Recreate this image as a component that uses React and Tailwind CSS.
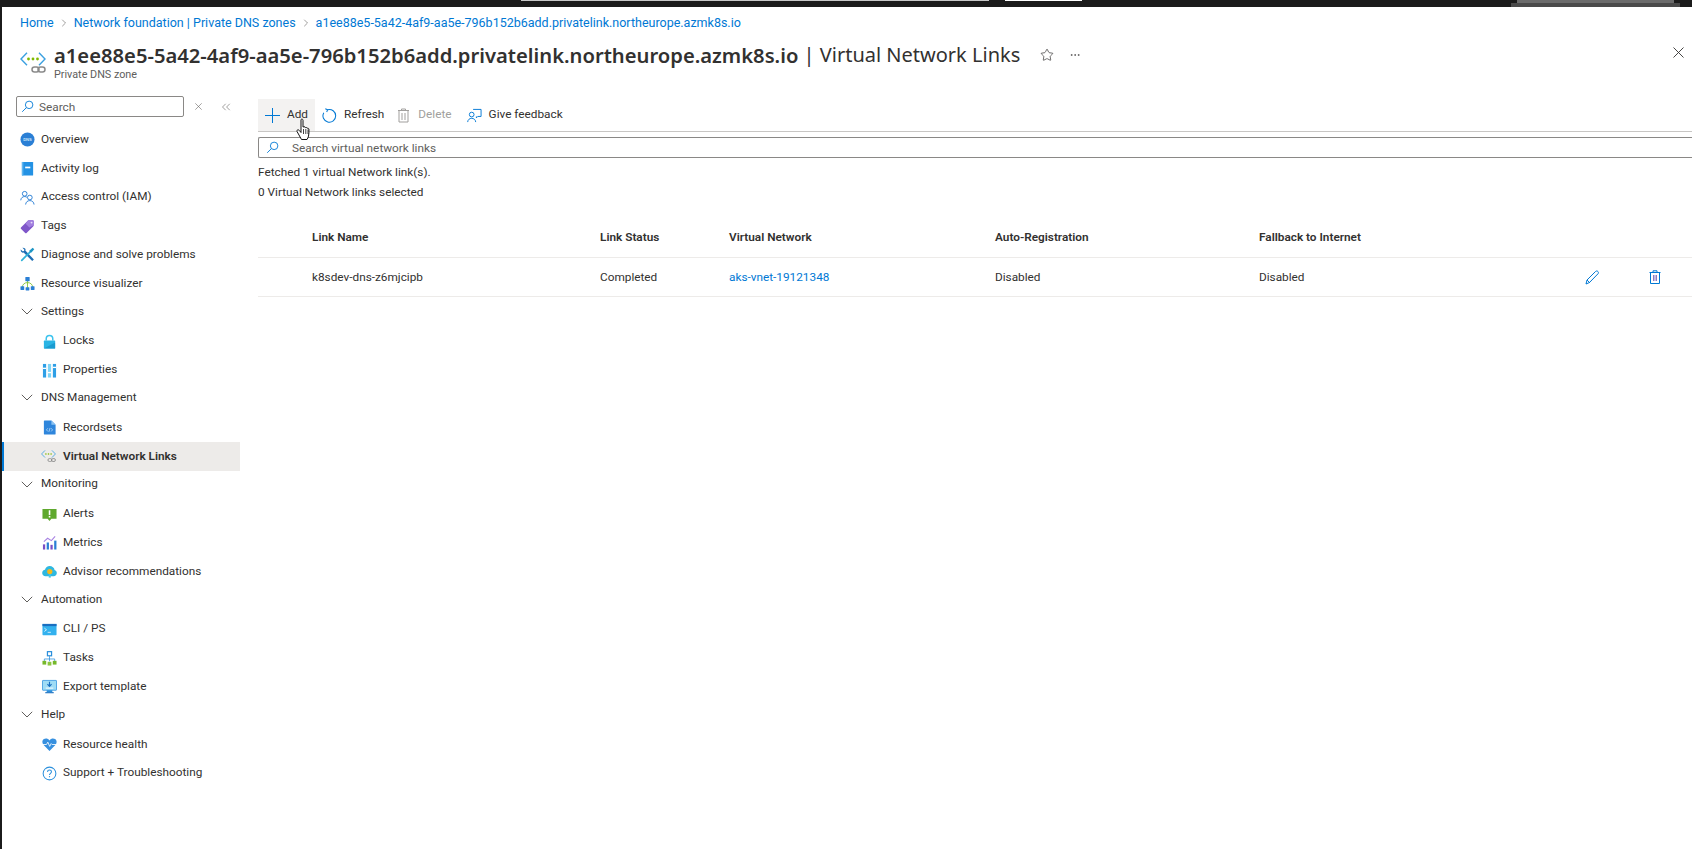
import { ChevronRight, ChevronsLeft, Star, MoreHorizontal } from 'lucide-react'

function Cross({ className, color = '#323130' }) {
  return (
    <svg className={className} viewBox="0 0 11 11" fill="none" stroke={color} strokeWidth="0.9">
      <path d="M.5.5l10 10M10.500.5l-10 10" />
    </svg>
  )
}

function SearchIcon({ className }) {
  return (
    <svg className={className} viewBox="0 0 16 16" fill="none" stroke="#0078d4" strokeWidth="1.1">
      <circle cx="10" cy="6" r="4.6" />
      <path d="M6.6 9.4 1.5 14.5" />
    </svg>
  )
}

function DnsLinkIcon({ className }) {
  return (
    <svg className={className} viewBox="0 0 26 21" fill="none">
      <path d="M7 .8 1 7l6 6.200" stroke="#3aa0e0" strokeWidth="1.400" />
      <path d="M19 .8 25 7l-6 6.200" stroke="#3aa0e0" strokeWidth="1.400" />
      <circle cx="8.500" cy="7" r="1.400" fill="#7fba00" />
      <circle cx="13" cy="7" r="1.400" fill="#7fba00" />
      <circle cx="17.500" cy="7" r="1.400" fill="#7fba00" />
      <rect x="12" y="15" width="7" height="5" rx="2.500" stroke="#8a8a8a" strokeWidth="1.500" />
      <rect x="18" y="15" width="7" height="5" rx="2.500" stroke="#8a8a8a" strokeWidth="1.500" />
    </svg>
  )
}

const icons = {
  overview: (
    <svg viewBox="0 0 16 16" className="w-[15px] h-[15px]">
      <circle cx="8" cy="8" r="7.5" fill="#2a7fd5" />
      <text x="8" y="9.6" fontSize="4.4" fontWeight="700" fill="#cfe6fa" textAnchor="middle" fontFamily="Liberation Sans, sans-serif">DNS</text>
    </svg>
  ),
  log: (
    <svg viewBox="0 0 16 16" className="w-[15px] h-[15px]">
      <rect x="2" y="1" width="12" height="14.5" rx="0.6" fill="#2492e4" />
      <rect x="2" y="1" width="1.6" height="14.5" fill="#5fb6f0" />
      <rect x="5.5" y="6" width="5.5" height="1.8" fill="#fff" />
    </svg>
  ),
  iam: (
    <svg viewBox="0 0 16 16" className="w-[15px] h-[15px]" fill="none" stroke="#2a7fd5" strokeWidth="1">
      <circle cx="5" cy="4" r="2.5" />
      <path d="M.8 11c.2-2.6 2-4 4.2-4 1 0 1.800.3 2.400.8" />
      <circle cx="10.500" cy="8" r="2.500" />
      <path d="M6 15.500c.2-2.600 2-4.200 4.500-4.200s4.300 1.600 4.500 4.200" />
    </svg>
  ),
  tags: (
    <svg viewBox="0 0 16 16" className="w-[15px] h-[15px]">
      <path d="M1 9 8 2c.4-.4.8-.6 1.300-.6h4.200c.6 0 1.100.5 1.100 1.100v4.200c0 .5-.2.900-.6 1.300l-7 7c-.4.400-1.100.4-1.500 0L1 10.500c-.4-.4-.4-1.100 0-1.500Z" fill="#7f56c9" />
      <path d="M8 2c.4-.4.800-.6 1.300-.6h4.200c.6 0 1.100.5 1.100 1.100v4.200L10 9 6 5Z" fill="#a27fdf" />
      <circle cx="12.300" cy="3.800" r="1" fill="#e6dcf7" />
    </svg>
  ),
  diagnose: (
    <svg viewBox="0 0 16 16" className="w-[15px] h-[15px]">
      <path d="M14.800 13.200 5.700 3.800l.3-1C5.700 1.300 4.200.5 2.600.8l2 2-.3 1.500-1.500.3-2-2c-.3 1.600.5 3.100 2 3.500l1-.3 9.200 9.200Z" fill="#1f6fb5" />
      <path d="M1.200 13.500 10 4.700l1.300 1.300-8.800 8.800c-.4.400-.9.400-1.300 0s-.4-.9 0-1.300Z" fill="#2fb2d8" />
      <path d="M10.200 3.800 13.500.8l1.700 1.700-3 3.300-1.400.2-.8-.8Z" fill="#1d95c4" />
    </svg>
  ),
  visualizer: (
    <svg viewBox="0 0 16 16" className="w-[15px] h-[15px]">
      <path d="M2.500 12c0-3 2.500-5 5.500-5s5.500 2 5.500 5" fill="none" stroke="#8cc63f" strokeWidth="1" />
      <path d="M8 5v8" stroke="#8cc63f" strokeWidth="1" />
      <rect x="5.700" y="1" width="4.600" height="4.600" rx="0.500" fill="#2a7fd5" />
      <rect x="0.500" y="11" width="4" height="4" rx="0.500" fill="#2a7fd5" />
      <rect x="6" y="12" width="4" height="3.500" rx="0.500" fill="#2a7fd5" />
      <rect x="11.500" y="11" width="4" height="4" rx="0.500" fill="#2a7fd5" />
    </svg>
  ),
  lock: (
    <svg viewBox="0 0 16 16" className="w-[15px] h-[15px]">
      <path d="M4.500 7V5a3.500 3.500 0 0 1 7 0v2" fill="none" stroke="#3cc3ee" strokeWidth="1.600" />
      <rect x="2" y="7" width="12" height="8.500" rx="0.600" fill="#2ab4e4" />
      <path d="M2 15.500 14 9v6.500Z" fill="#1a9bd0" />
    </svg>
  ),
  properties: (
    <svg viewBox="0 0 16 16" className="w-[15px] h-[15px]">
      <rect x="1" y="1" width="3.400" height="14.500" fill="#2e9fe6" />
      <rect x="6.300" y="1" width="3.400" height="14.500" fill="#7fd4f5" />
      <rect x="11.600" y="1" width="3.400" height="14.500" fill="#2e9fe6" />
      <rect x="1" y="5" width="3.400" height="1.400" fill="#fff" />
      <rect x="6.300" y="9.500" width="3.400" height="1.400" fill="#fff" />
      <rect x="11.600" y="4" width="3.400" height="1.400" fill="#fff" />
    </svg>
  ),
  records: (
    <svg viewBox="0 0 16 16" className="w-[15px] h-[15px]">
      <path d="M2 1a.5.5 0 0 1 .5-.5H10L14.500 5v10a.5.5 0 0 1-.5.5H2.500A.5.5 0 0 1 2 15Z" fill="#2f86dc" />
      <path d="M10 .5 14.500 5H10Z" fill="#8cc3f2" />
      <path d="M6.200 8.800 4.800 10.500l1.400 1.700M9.800 8.800l1.400 1.700-1.400 1.700M8.600 8.500l-1.200 4" stroke="#d8ecfc" strokeWidth="0.700" fill="none" />
    </svg>
  ),
  alerts: (
    <svg viewBox="0 0 16 16" className="w-[15px] h-[15px]">
      <path d="M.5 2h15v10.500H10L8 15l-2-2.500H.5Z" fill="#5fa82e" />
      <rect x="7.200" y="3.500" width="1.700" height="5" fill="#fff" />
      <rect x="7.200" y="9.500" width="1.700" height="1.700" fill="#fff" />
    </svg>
  ),
  metrics: (
    <svg viewBox="0 0 16 16" className="w-[15px] h-[15px]">
      <rect x="1" y="10" width="2.400" height="5.500" fill="#7a4fc4" />
      <rect x="5" y="8" width="2.400" height="7.500" fill="#2a7fd5" />
      <rect x="9" y="10.500" width="2.400" height="5" fill="#7a4fc4" />
      <rect x="13" y="6" width="2.400" height="9.500" fill="#2a7fd5" />
      <path d="M2 7 6 3.500 10 6l4-4.500" fill="none" stroke="#a882e3" strokeWidth="1.200" />
    </svg>
  ),
  advisor: (
    <svg viewBox="0 0 16 16" className="w-[15px] h-[15px]">
      <path d="M3.800 13C1.700 13 .2 11.500.2 9.600c0-1.800 1.300-3.200 3-3.400C3.700 3.800 5.800 2.200 8.200 2.200c2.700 0 4.800 1.800 5.200 4.200 1.400.4 2.400 1.600 2.400 3.100 0 1.900-1.500 3.500-3.400 3.500Z" fill="#2fb8e0" />
      <circle cx="8.300" cy="8" r="2.800" fill="#f6b91d" />
      <rect x="7.200" y="11" width="2.200" height="3.500" fill="#49c6e8" />
    </svg>
  ),
  cli: (
    <svg viewBox="0 0 16 16" className="w-[15px] h-[15px]">
      <rect x="0.500" y="2" width="15" height="12" rx="0.600" fill="#33b1ee" />
      <rect x="0.500" y="2" width="15" height="2.400" fill="#1a6fc0" />
      <path d="m2.500 6.500 2.300 1.800-2.300 1.800M6 11h3.500" stroke="#fff" strokeWidth="0.800" fill="none" />
    </svg>
  ),
  tasks: (
    <svg viewBox="0 0 16 16" className="w-[15px] h-[15px]">
      <path d="M8 5.500V11M2.500 11V8.500h11V11" stroke="#2a8fdc" strokeWidth="0.800" fill="none" />
      <rect x="5.800" y="0.700" width="4.400" height="4.400" fill="#fff" stroke="#2a8fdc" strokeWidth="1.300" />
      <rect x="0.500" y="10.500" width="4" height="4" fill="#76b82a" />
      <rect x="6" y="11.500" width="4" height="4" fill="#8cc63f" />
      <rect x="11.500" y="10.500" width="4" height="4" fill="#76b82a" />
    </svg>
  ),
  export: (
    <svg viewBox="0 0 16 16" className="w-[15px] h-[15px]">
      <rect x="0.500" y="1.500" width="15" height="10.500" rx="0.500" fill="#9fdcf5" stroke="#2a8fdc" strokeWidth="0.800" />
      <rect x="5" y="12" width="6" height="2" fill="#2a8fdc" />
      <rect x="3.500" y="14" width="9" height="1.200" fill="#1a6fc0" />
      <path d="M8 3v4.500M5.800 5.500 8 7.800l2.200-2.300" stroke="#1a6fc0" strokeWidth="1.200" fill="none" />
      <path d="M4 9.700h8" stroke="#fff" strokeWidth="1" />
    </svg>
  ),
  health: (
    <svg viewBox="0 0 16 16" className="w-[15px] h-[15px]">
      <path d="M8 15 1.500 8.200C-.2 6.300.1 3.500 2.100 2.200c1.900-1.100 4.400-.6 5.900 1.500 1.500-2.100 4-2.600 5.900-1.500 2 1.300 2.300 4.100.6 6Z" fill="#3790df" />
      <path d="M0.800 8h4l1.400-2.500L8.200 10l1.600-3 1 1h4.500" fill="none" stroke="#fff" strokeWidth="0.900" />
    </svg>
  ),
  support: (
    <svg viewBox="0 0 16 16" className="w-[15px] h-[15px]" fill="none" stroke="#2a8fdc">
      <circle cx="8" cy="8" r="6.800" strokeWidth="1.100" />
      <path d="M5.900 6.300c0-1.300 1-2 2.100-2s2.100.7 2.100 1.900c0 1.500-2.100 1.700-2.100 3.300" strokeWidth="1.100" />
      <path d="M8 10.800v1.200" strokeWidth="1.200" />
    </svg>
  ),
}

const nav = [
  { label: 'Overview', icon: 'overview' },
  { label: 'Activity log', icon: 'log' },
  { label: 'Access control (IAM)', icon: 'iam' },
  { label: 'Tags', icon: 'tags' },
  { label: 'Diagnose and solve problems', icon: 'diagnose' },
  { label: 'Resource visualizer', icon: 'visualizer' },
  { label: 'Settings', group: true },
  { label: 'Locks', icon: 'lock', child: true },
  { label: 'Properties', icon: 'properties', child: true },
  { label: 'DNS Management', group: true },
  { label: 'Recordsets', icon: 'records', child: true },
  { label: 'Virtual Network Links', child: true, selected: true },
  { label: 'Monitoring', group: true },
  { label: 'Alerts', icon: 'alerts', child: true },
  { label: 'Metrics', icon: 'metrics', child: true },
  { label: 'Advisor recommendations', icon: 'advisor', child: true },
  { label: 'Automation', group: true },
  { label: 'CLI / PS', icon: 'cli', child: true },
  { label: 'Tasks', icon: 'tasks', child: true },
  { label: 'Export template', icon: 'export', child: true },
  { label: 'Help', group: true },
  { label: 'Resource health', icon: 'health', child: true },
  { label: 'Support + Troubleshooting', icon: 'support', child: true },
]

function NavRow({ item }) {
  if (item.group) {
    return (
      <div className="h-[28.8px] flex items-center pl-[19px] pb-[2px]">
        <svg className="w-[12px] h-[7px] mr-[8px]" viewBox="0 0 12 7" fill="none" stroke="#605e5c">
          <path d="M.8.8 6 6l5.200-5.200" />
        </svg>
        <span>{item.label}</span>
      </div>
    )
  }
  if (item.selected) {
    return (
      <div className="h-[28.8px] flex items-center pl-[37px] bg-[#edebe9] border-l-2 border-[#0078d4] font-semibold">
        <DnsLinkIcon className="w-[15px] h-[14px] mr-[7px]" />
        <span>{item.label}</span>
      </div>
    )
  }
  return (
    <div className={`h-[28.8px] flex items-center ${item.child ? 'pl-[40px]' : 'pl-[18px]'}`}>
      <span className="w-[15px] h-[15px] mr-[6px] flex">{icons[item.icon]}</span>
      <span>{item.label}</span>
    </div>
  )
}

function Sidebar() {
  return (
    <div className="w-[238px] shrink-0 pt-[14px]">
      <div className="flex items-center">
        <div className="ml-[14px] w-[168px] h-[21px] border border-[#8a8886] rounded-[2px] flex items-center pl-[4px]">
          <SearchIcon className="w-[13px] h-[13px] mr-[5px]" />
          <span className="text-[#605e5c] pt-[2px]">Search</span>
        </div>
        <Cross className="w-[7px] h-[7px] ml-[11px]" color="#605e5c" />
        <ChevronsLeft className="w-[14px] h-[14px] ml-[17px] text-[#797775]" strokeWidth={1.2} />
      </div>
      <div className="mt-[8.3px]">
        {nav.map(item => <NavRow key={item.label} item={item} />)}
      </div>
    </div>
  )
}

function Toolbar() {
  return (
    <div className="relative h-[33px] border-b border-[#c8c6c4] flex items-center">
      <div className="h-[32px] w-[57px] bg-[#f3f2f1] flex items-center pl-[7px]">
        <svg className="w-[15px] h-[15px] mr-[7px]" viewBox="0 0 15 15" stroke="#0078d4">
          <path d="M7.500 0v15M0 7.500h15" />
        </svg>
        <span>Add</span>
      </div>
      <div className="flex items-center ml-[7px]">
        <svg className="w-[15px] h-[15px] mr-[7px]" viewBox="0 0 16 16" fill="none" stroke="#0078d4" strokeWidth="1.100">
          <path d="M6 1.800A6.800 6.800 0 1 1 1.900 5" />
          <path d="M3.500 .8 6 1.800 5 4.300" />
        </svg>
        <span>Refresh</span>
      </div>
      <div className="flex items-center ml-[13px] text-[#a19f9d]">
        <svg className="w-[13px] h-[15px] mr-[8px]" viewBox="0 0 13 15" fill="none" stroke="#a19f9d">
          <path d="M1 2.500h11M4.500 2.500V1h4v1.500M2 2.500V14h9V2.500M5 5v7M8 5v7" />
        </svg>
        <span>Delete</span>
      </div>
      <div className="flex items-center ml-[15px]">
        <svg className="w-[15px] h-[15px] mr-[7px]" viewBox="0 0 16 16" fill="none" stroke="#0078d4" strokeWidth="1">
          <path d="M6.500 1.500h8.500v7.500h-3.500l-1.500 1.500V9" />
          <circle cx="5" cy="7" r="2.500" />
          <path d="M.7 15c.2-2.500 2-4 4.300-4 2.300 0 4.100 1.500 4.300 4" />
        </svg>
        <span>Give feedback</span>
      </div>
      {/* mouse pointer in the capture */}
      <svg className="absolute left-[37px] top-[19px] w-[17px] h-[23px]" viewBox="0 0 15 23">
        <path d="M5 1.500c.8-.8 2-.4 2 .8V9l1-.2c.8-.2 1.400.2 1.500.8.6-.3 1.500-.1 1.700.7.700-.3 1.500 0 1.700.8.200 2 .1 5-.4 7-.3 1.400-.8 2.300-1.500 3.400H5.500L1.300 14c-.6-.9-.4-1.800.3-2.100.7-.3 1.400.1 2 .9L5 14.500Z" fill="#fff" stroke="#111" strokeWidth="1" />
        <path d="M7.500 11v5M9.800 11v5M12 11.500v4.500" stroke="#111" strokeWidth="0.800" />
      </svg>
    </div>
  )
}

function Content() {
  return (
    <div className="flex-1 min-w-0 pt-[17px] pl-[18px]">
      <Toolbar />
      <div className="mt-[5px] h-[21px] border-y border-l border-[#8a8886] rounded-l-[2px] flex items-center pl-[7px]">
        <SearchIcon className="w-[13px] h-[13px] mr-[13px]" />
        <span className="text-[#605e5c] pt-[2px]">Search virtual network links</span>
      </div>
      <div className="mt-[4px] h-[20px] pt-[2px] flex items-center">Fetched 1 virtual Network link(s).</div>
      <div className="h-[20px] pt-[2px] flex items-center">0 Virtual Network links selected</div>
      <div className="mt-[15px] h-[41px] pt-[2px] border-b border-[#edebe9] flex items-center font-semibold pl-[54px]">
        <div className="w-[288px]">Link Name</div>
        <div className="w-[129px]">Link Status</div>
        <div className="w-[266px]">Virtual Network</div>
        <div className="w-[264px]">Auto-Registration</div>
        <div>Fallback to Internet</div>
      </div>
      <div className="h-[39px] border-b border-[#edebe9] flex items-center pl-[54px]">
        <div className="w-[288px] pt-[2px]">k8sdev-dns-z6mjcipb</div>
        <div className="w-[129px] pt-[2px]">Completed</div>
        <div className="w-[266px] pt-[2px] text-[#0078d4]">aks-vnet-19121348</div>
        <div className="w-[264px] pt-[2px]">Disabled</div>
        <div className="w-[326px] pt-[2px]">Disabled</div>
        <svg className="w-[15px] h-[15px]" viewBox="0 0 15 15" fill="none" stroke="#0078d4">
          <path d="M1 14l1-4 8.500-8.500c.7-.7 1.800-.7 2.400 0 .7.700.7 1.700 0 2.400L4.500 12.500Z" />
          <path d="M2 10l3 3" />
        </svg>
        <svg className="w-[12px] h-[14px] ml-[49px]" viewBox="0 0 12 14" fill="none">
          <path d="M.5 2.500h11M4 2.500V.8h4v1.700M1.500 2.500v11h9v-11" stroke="#0078d4" />
          <path d="M4.500 5v6M6 5v6M7.500 5v6" stroke="#8e7cc3" />
        </svg>
      </div>
    </div>
  )
}

export default function App() {
  return (
    <div className="h-[849px] overflow-hidden flex flex-col bg-white text-[11.8px] text-[#323130] font-['Roboto',sans-serif]">
      <div className="h-[7px] shrink-0 bg-[#1b1b1b] flex items-start">
        <div className="w-[521px]" />
        <div className="w-[468px] h-px bg-[#c8c8c8]" />
        <div className="w-[16px]" />
        <div className="w-[77px] h-px bg-white" />
        <div className="w-[429px]" />
        <div className="w-[169px] h-full flex flex-col">
          <div className="h-[3px] mx-[6px] bg-[#6b6b6b]" />
          <div className="h-[4px] bg-[#4a4a4a]" />
        </div>
      </div>
      <div className="flex-1 flex flex-col border-l-2 border-[#1b1b1b] min-h-0">
        <div className="h-[32px] shrink-0 flex items-center pl-[18px] text-[12.5px] text-[#0078d4]">
          <span>Home</span>
          <ChevronRight className="w-[12px] h-[12px] mx-[4px] text-[#605e5c]" strokeWidth={1.2} />
          <span>Network foundation | Private DNS zones</span>
          <ChevronRight className="w-[12px] h-[12px] mx-[4px] text-[#605e5c]" strokeWidth={1.2} />
          <span>a1ee88e5-5a42-4af9-aa5e-796b152b6add.privatelink.northeurope.azmk8s.io</span>
        </div>
        <div className="pl-[18px] shrink-0 flex">
          <DnsLinkIcon className="w-[26px] h-[21px] mt-[13px] mr-[8px]" />
          <div>
            <div className="mt-[3px] h-[26px] flex items-center text-[20px] leading-[26px] font-['Noto_Sans',sans-serif]">
              <span className="font-semibold text-[20.2px]">a1ee88e5-5a42-4af9-aa5e-796b152b6add.privatelink.northeurope.azmk8s.io</span>
              <span>&nbsp;| Virtual Network Links</span>
              <Star className="w-[14px] h-[14px] ml-[20px]" strokeWidth={1.2} />
              <MoreHorizontal className="w-[12px] h-[12px] ml-[15px]" strokeWidth={1.2} />
            </div>
            <div className="h-[14px] flex items-center text-[10.8px] text-[#605e5c]">Private DNS zone</div>
          </div>
          <Cross className="ml-auto mr-[8px] mt-[8px] w-[11px] h-[11px]" />
        </div>
        <div className="flex-1 flex min-h-0">
          <Sidebar />
          <Content />
        </div>
      </div>
    </div>
  )
}
